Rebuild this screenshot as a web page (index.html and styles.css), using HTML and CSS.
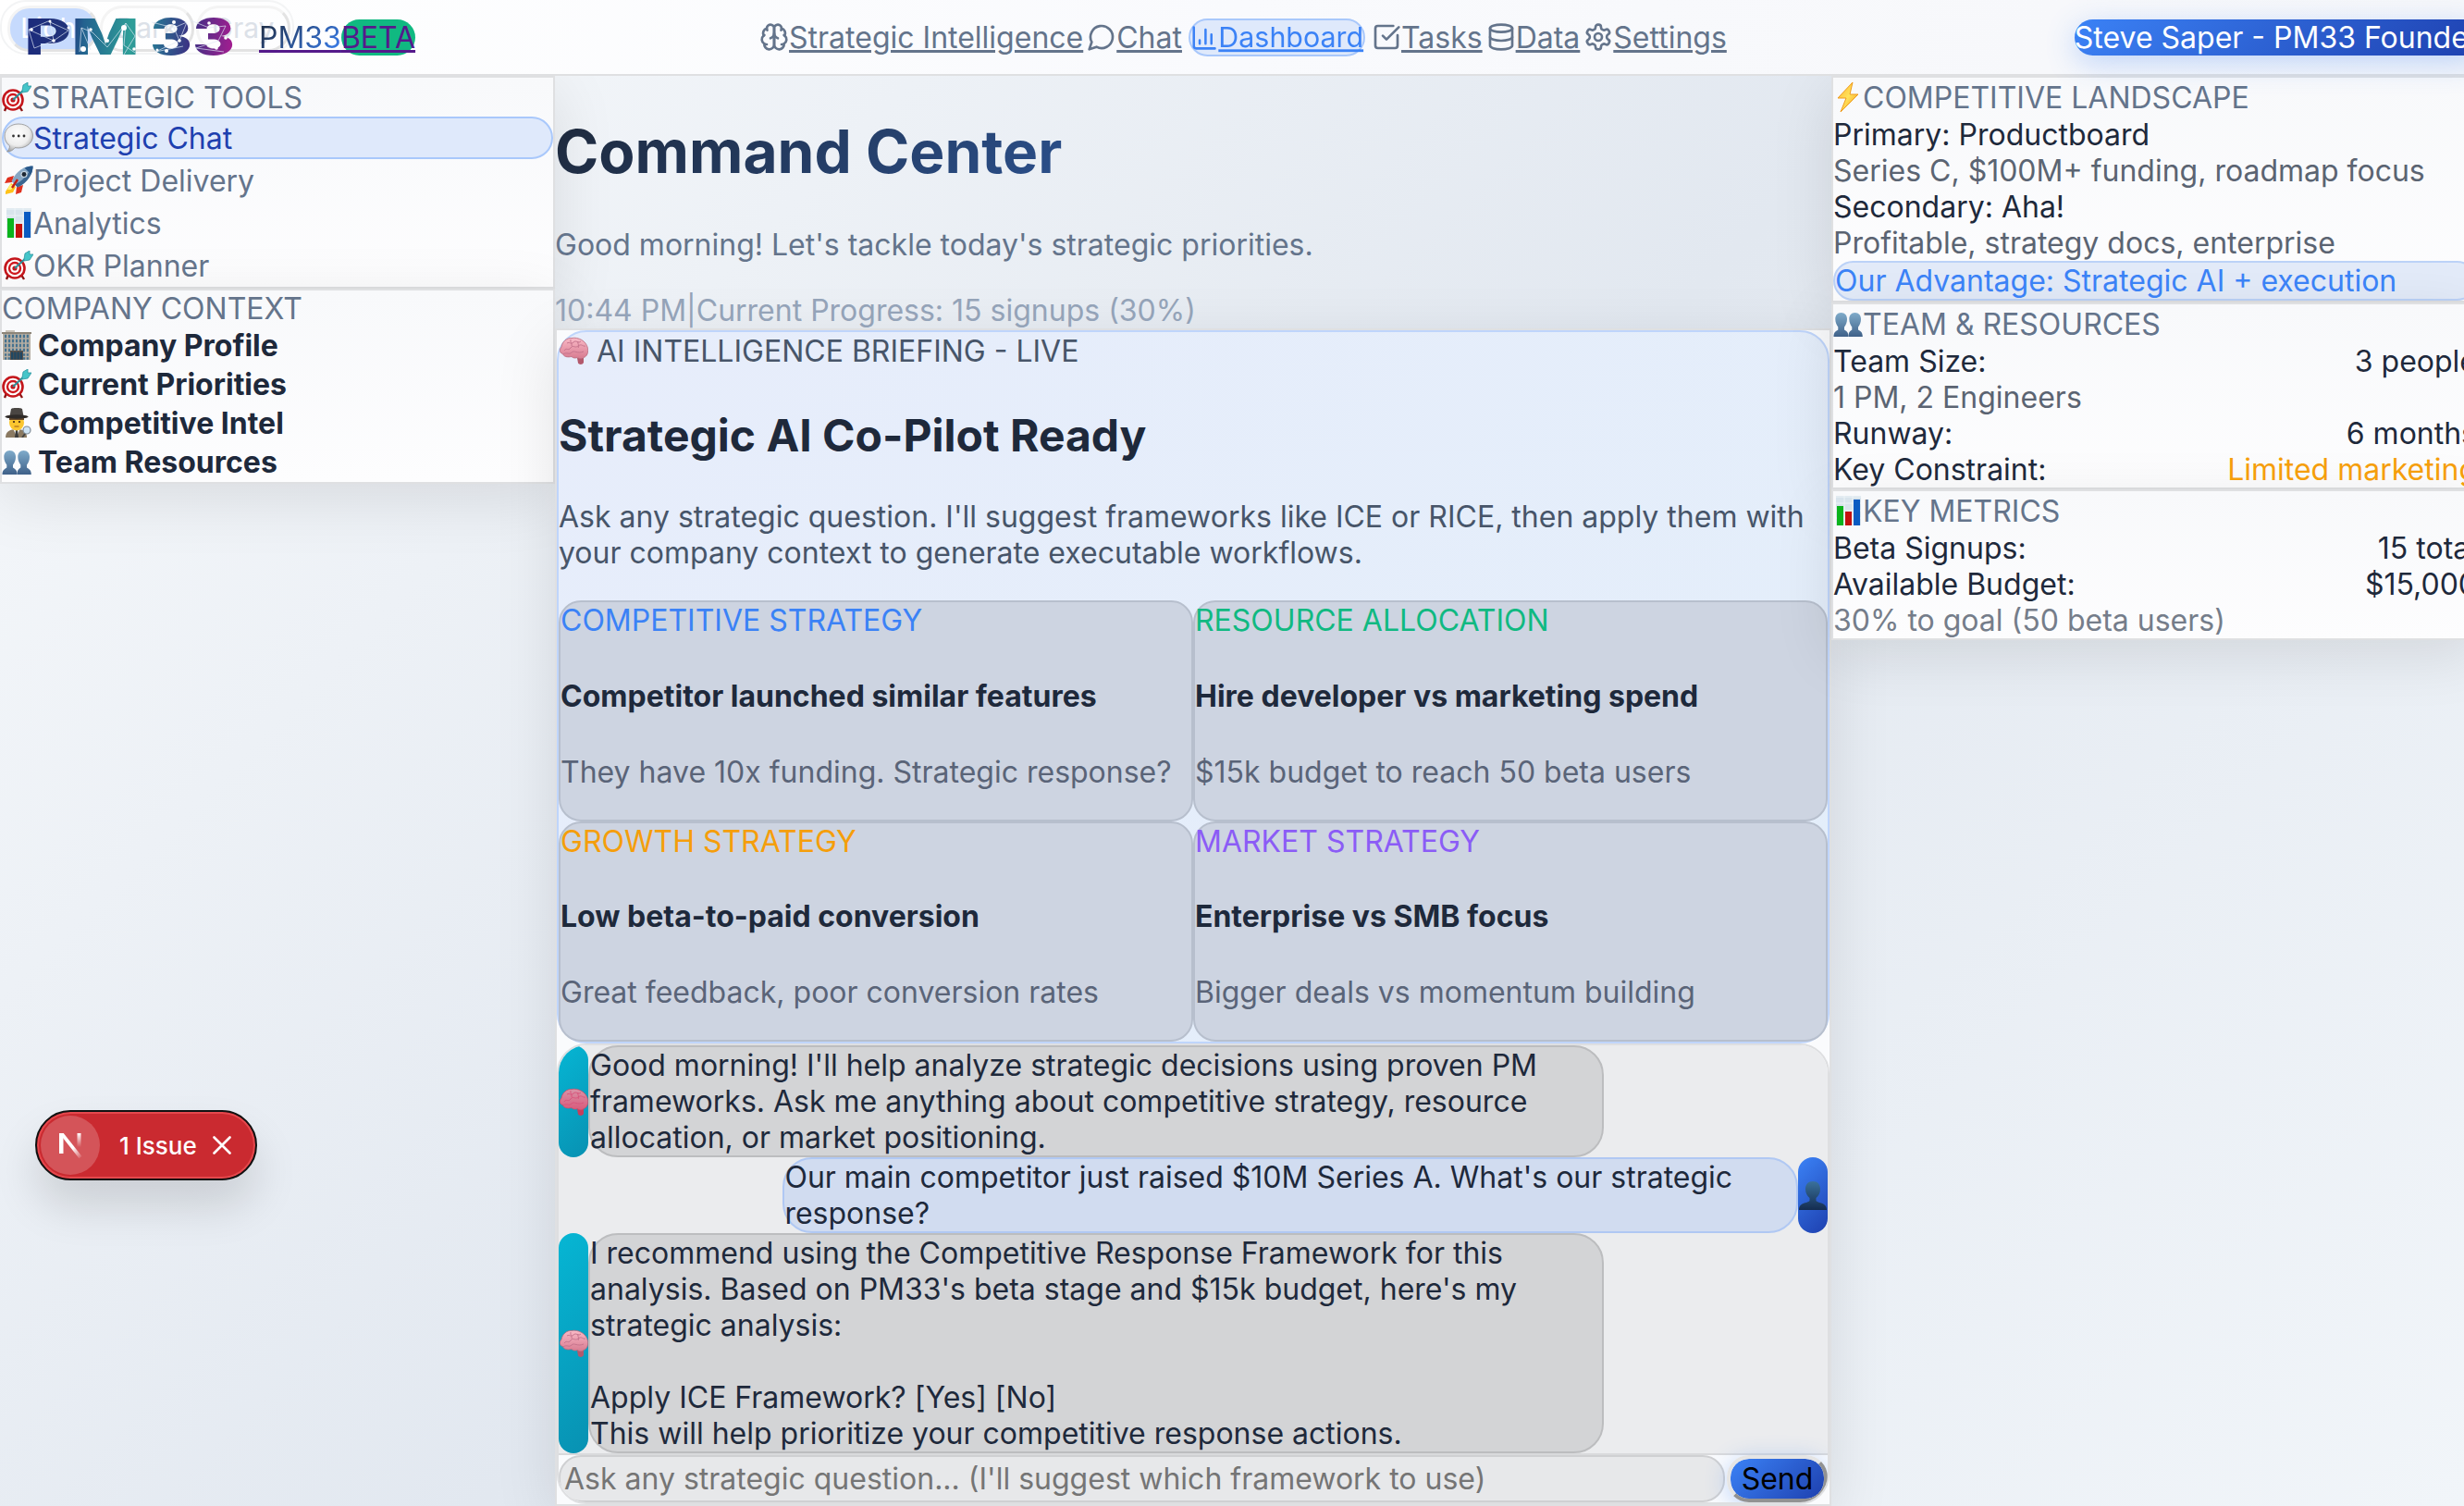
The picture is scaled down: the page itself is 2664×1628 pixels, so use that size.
FILE: index.html
```html
<!DOCTYPE html>
<html lang="en">
<head>
<meta charset="utf-8">
<title>PM33 Command Center</title>
<link rel="stylesheet" href="styles.css">
</head>
<body>
<svg class="defs" width="0" height="0" aria-hidden="true">
  <defs>
    <linearGradient id="gPink" x1="0" y1="0" x2="0" y2="1"><stop offset="0" stop-color="#f9b9c6"/><stop offset="1" stop-color="#d77a90"/></linearGradient>
    <linearGradient id="gBust" x1="0" y1="0" x2="0" y2="1"><stop offset="0" stop-color="#7fabca"/><stop offset="1" stop-color="#3f6189"/></linearGradient>
    <linearGradient id="gUser" x1="0" y1="0" x2="0" y2="1"><stop offset="0" stop-color="#3a719c"/><stop offset="1" stop-color="#142c50"/></linearGradient>
    <radialGradient id="gBubble" cx=".45" cy=".35" r=".65"><stop offset="0" stop-color="#ffffff"/><stop offset=".65" stop-color="#ededed"/><stop offset="1" stop-color="#a9a9a9"/></radialGradient>
    <linearGradient id="gBolt" x1="0" y1="0" x2="1" y2="1"><stop offset="0" stop-color="#ffb02e"/><stop offset=".5" stop-color="#ffe25a"/><stop offset="1" stop-color="#f28c13"/></linearGradient>
  </defs>
  <symbol id="e-target" viewBox="0 0 32 32">
    <path d="M5 26l-2 5M19 26l3 5" stroke="#8c1414" stroke-width="2.4"/>
    <circle cx="12" cy="19" r="11.8" fill="#c4161c"/><circle cx="12" cy="19" r="9.2" fill="#fff"/><circle cx="12" cy="19" r="7.2" fill="#cf1a20"/><circle cx="12" cy="19" r="4.8" fill="#fff"/><circle cx="12" cy="19" r="2.6" fill="#c4161c"/>
    <path d="M12 19L25 7" stroke="#2b8d97" stroke-width="2"/>
    <path d="M22 9l1-6 5-3 0 4 4 0-4 6-6 1z" fill="#45c5c9" stroke="#2b96a0" stroke-width=".8"/>
  </symbol>
  <symbol id="e-speech" viewBox="0 0 32 32">
    <path d="M16 1C7.500 1 1 6.500 1 14c0 4.500 2 8.300 5.500 10.700C6.500 27.500 5 29.500 3.500 31c4 0 7-2 8.500-4.300C23 28.500 31.500 22 31.500 14 31.500 6.500 25 1 16 1z" fill="url(#gBubble)" stroke="#8f8f8f" stroke-width=".8"/>
    <g fill="#333"><circle cx="10.500" cy="14" r="1.400"/><circle cx="16.200" cy="14" r="1.400"/><circle cx="22" cy="14" r="1.400"/></g>
  </symbol>
  <symbol id="e-rocket" viewBox="0 0 32 32">
    <path d="M8 19l-6 9 0 3 8-2 3-6z" fill="#ffc21a"/><path d="M7 20l-3 6 4 0 3-4z" fill="#fff27a"/>
    <path d="M11 11L4 13 1 19l8-1zM21 21l-2 8-6 2 1-8z" fill="#e0301e"/>
    <path d="M31.500.5C23 .5 14 5 8.500 17l6.500 6.500C26 18.500 31.500 9 31.500.5z" fill="#86a7c4"/>
    <path d="M31.500.5C26 10 20 17 12 20.500l3 3C26 18.500 31.500 9 31.500.5z" fill="#3b6690"/>
    <path d="M31.500.5c-3 0-6 .6-9 2l7 7c1.400-3 2-6 2-9z" fill="#28588a"/>
    <circle cx="22" cy="9.500" r="3.600" fill="#c8d6e0"/><circle cx="22" cy="9.500" r="2.400" fill="#1c2733"/>
    <path d="M15 15l-6 9" stroke="#c41f14" stroke-width="2.400"/>
  </symbol>
  <symbol id="e-chart" viewBox="0 0 32 32">
    <rect x="3" y="0" width="27" height="32" fill="#d8e4ec"/><path d="M3 1h27M3 8h27M3 16h27M3 24h27M12 0v32M21 0v32" stroke="#edf3f7" stroke-width="1"/>
    <rect x="4" y="11" width="7" height="21" fill="#0bb31c"/><rect x="13" y="17" width="7" height="15" fill="#c3110e"/><rect x="22" y="4" width="7" height="28" fill="#0a5bc2"/>
  </symbol>
  <symbol id="e-office" viewBox="0 0 32 32">
    <rect x="4" y="0" width="10" height="3" fill="#c9c2b8"/><rect x="1" y="2" width="30" height="30" fill="#b5aea3"/><rect x="0" y="2" width="32" height="2" fill="#8d8578"/>
    <path d="M3 6.500h26M3 11.500h26M3 16.500h26M3 21.500h26" stroke="#45728f" stroke-width="3.500" stroke-dasharray="2.200 1.760"/>
    <path d="M3 26.500h6M3 30.500h6M23 26.500h6M23 30.500h6" stroke="#45728f" stroke-width="2.500" stroke-dasharray="2.200 1.500"/>
    <rect x="9" y="22" width="14" height="10" fill="#5a5048"/><path d="M10 27.500h12" stroke="#1f4763" stroke-width="8" stroke-dasharray="2.400 .8"/>
  </symbol>
  <symbol id="e-detective" viewBox="0 0 32 32">
    <path d="M4 32c0-6 4-9 12-9s11 3 11 9z" fill="#8b7a62"/><path d="M12 22l4 9 4-9z" fill="#eef0f2"/><path d="M15 24h2l1 8h-4z" fill="#3b3b3b"/>
    <ellipse cx="16" cy="16" rx="8" ry="8.500" fill="#fbc62f"/><path d="M8 13v-3h16v3z" fill="#6a4b2a"/>
    <path d="M8.500 9L10 1c2-1.500 10-1.500 12 0l1.500 8z" fill="#4a4643"/><ellipse cx="16" cy="9.500" rx="12.500" ry="2.200" fill="#2f2b29"/>
    <circle cx="13" cy="15" r="1.100" fill="#3b2417"/><circle cx="19" cy="15" r="1.100" fill="#3b2417"/><path d="M13.500 20h5" stroke="#9c5a1a" stroke-width="1"/>
    <circle cx="27" cy="24" r="4" fill="#cfe4f4" stroke="#7e8a96" stroke-width="1.200"/><path d="M25 28l-3 4" stroke="#444" stroke-width="1.800"/>
  </symbol>
  <symbol id="e-busts" viewBox="0 0 32 32">
    <path id="bust" d="M8.500 4C4.500 4 2.300 7 2.300 11c0 3.500 1.400 6.500 3 8.500v3C3.500 24 .5 24.500.5 30h16c0-5.500-2.500-6-4.500-7.500v-3c1.700-2 3-5 3-8.500 0-4-2.300-7-6.500-7z" fill="url(#gBust)"/>
    <path d="M23.500 4c-4 0-6.200 3-6.200 7 0 3.500 1.400 6.500 3 8.500v3c-1.800 1.500-3.800 2-3.800 7.500h15.300c0-5.500-2.800-6-4.800-7.500v-3c1.700-2 3-5 3-8.500 0-4-2.300-7-6.500-7z" fill="url(#gBust)"/>
  </symbol>
  <symbol id="e-user" viewBox="0 0 32 32">
    <path d="M16 1c-5 0-8 3.200-8 8.500 0 4 2 7.500 4.500 9.500v3C10 25 1 23.500 1 32h30c0-8.500-9-7-11.500-10v-3c2.500-2 4.500-5.500 4.500-9.500C24 4.200 21 1 16 1z" fill="url(#gUser)"/>
  </symbol>
  <symbol id="e-brain" viewBox="0 0 32 32">
    <path d="M20 24l7 0 0 5c-1 2.500-5 2.500-6 .5z" fill="#b3596c"/>
    <path d="M3 12C4 6 9 2 14 2.500c7-1.500 16 3 17.500 11 .8 5-1 9-4.500 10-2 2-5 1.500-6.500 0-3 1-5 .5-6.500-1-5 1-8.500 0-9.500-3C.5 18.500.8 14.500 3 12z" fill="url(#gPink)" stroke="#b9687b" stroke-width=".8"/>
    <path d="M6 16c3-4 4 1 7-3s4 1 8-2 5 1 8 0M9 8c3-2 4 2 7-1s5 2 8-1M5 20c4-3 6 1 9-2s6 2 13-1M13 4c-1 4 2 3 1 7M21 6c-1 3 2 4 0 7" fill="none" stroke="#c2708a" stroke-width=".9"/>
  </symbol>
  <symbol id="e-bolt" viewBox="0 0 32 32">
    <path d="M21 0L5 17h9L8 32l19-19h-9z" fill="url(#gBolt)" stroke="#ee9a1c" stroke-width="1"/>
  </symbol>
</svg>

<header class="topbar">
  <div class="themes">
    <span class="theme theme-on">Light</span><span class="theme">Dark</span><span class="theme">Gray</span>
  </div>
  <a class="brand" href="#">
    <svg class="logo" width="228" height="44" viewBox="0 0 228 44">
      <defs>
        <linearGradient id="lg" gradientUnits="userSpaceOnUse" x1="0" y1="10" x2="228" y2="30">
          <stop offset="0" stop-color="#1b2a7c"/><stop offset=".2" stop-color="#22347a"/><stop offset=".27" stop-color="#23618f"/><stop offset=".5" stop-color="#2f9f98"/><stop offset=".62" stop-color="#2a6f92"/><stop offset=".78" stop-color="#3c3183"/><stop offset="1" stop-color="#ad1c92"/>
        </linearGradient>
      </defs>
      <g class="logo-text" fill="url(#lg)">
        <text x="-2" y="41" textLength="125" lengthAdjust="spacingAndGlyphs">PM</text>
        <text x="134" y="41" textLength="92" lengthAdjust="spacingAndGlyphs">33</text>
      </g>
      <g fill="none" stroke="#dfe9f5" stroke-width=".8" opacity=".85">
        <path d="M3 14L24 5l22 10-16 11L3 14l6 20 21-8-4-21M58 38l2-26 12 5 16 16 20-26 10 14-12 20M60 12l10 24M108 7l-2 24 12 8M136 6l24 6 14-6-8 20-26 12 30-6M178 4l20 8 18-2-8 16-24 8 30 4M160 12l6 14"/>
      </g>
      <g fill="#fff">
        <circle cx="6" cy="14" r="1.800"/><circle cx="26" cy="5" r="1.500"/><circle cx="30" cy="26" r="1.800"/><circle cx="46" cy="12" r="1.500"/><circle cx="62" cy="35" r="3"/><circle cx="70" cy="14" r="1.800"/><circle cx="88" cy="26" r="2"/><circle cx="106" cy="12" r="3"/><circle cx="117" cy="35" r="1.800"/><circle cx="160" cy="6" r="2"/><circle cx="166" cy="26" r="1.800"/><circle cx="152" cy="37" r="2"/><circle cx="198" cy="7" r="1.800"/><circle cx="216" cy="23" r="1.800"/><circle cx="206" cy="34" r="1.800"/><circle cx="142" cy="36" r="1.500"/>
      </g>
    </svg>
    <span class="brand-name"><span class="brand-text">PM33</span><span class="beta">BETA</span></span>
  </a>
  <nav class="nav">
    <a href="#" class="nav-item"><svg class="ico" viewBox="0 0 24 24"><path d="M12 5a3 3 0 1 0-5.997.125 4 4 0 0 0-2.526 5.770 4 4 0 0 0 .556 6.588A4 4 0 1 0 12 18Z"/><path d="M12 5a3 3 0 1 1 5.997.125 4 4 0 0 1 2.526 5.770 4 4 0 0 1-.556 6.588A4 4 0 1 1 12 18Z"/><path d="M15 13a4.500 4.500 0 0 1-3-4 4.500 4.500 0 0 1-3 4"/><path d="M17.599 6.500a3 3 0 0 0 .399-1.375M6.003 5.125A3 3 0 0 0 6.401 6.500M3.477 10.896a4 4 0 0 1 .585-.396M19.938 10.500a4 4 0 0 1 .585.396M6 18a4 4 0 0 1-1.967-.516M19.967 17.484A4 4 0 0 1 18 18"/></svg><span>Strategic Intelligence</span></a>
    <a href="#" class="nav-item"><svg class="ico" viewBox="0 0 24 24"><path d="M7.900 20A9 9 0 1 0 4 16.100L2 22Z"/></svg><span>Chat</span></a>
    <a href="#" class="nav-item nav-active"><svg class="ico" viewBox="0 0 24 24"><path d="M3 3v16a2 2 0 0 0 2 2h16M18 17V9M13 17V5M8 17v-3"/></svg><span>Dashboard</span></a>
    <a href="#" class="nav-item"><svg class="ico" viewBox="0 0 24 24"><path d="M21 10.500V19a2 2 0 0 1-2 2H5a2 2 0 0 1-2-2V5a2 2 0 0 1 2-2h12.500"/><path d="m9 11 3 3L22 4"/></svg><span>Tasks</span></a>
    <a href="#" class="nav-item"><svg class="ico" viewBox="0 0 24 24"><ellipse cx="12" cy="5" rx="9" ry="3"/><path d="M3 5v14a9 3 0 0 0 18 0V5"/><path d="M3 12a9 3 0 0 0 18 0"/></svg><span>Data</span></a>
    <a href="#" class="nav-item"><svg class="ico" viewBox="0 0 24 24"><path d="M12.220 2h-.440a2 2 0 0 0-2 2v.180a2 2 0 0 1-1 1.730l-.430.250a2 2 0 0 1-2 0l-.150-.080a2 2 0 0 0-2.730.730l-.220.380a2 2 0 0 0 .730 2.730l.150.100a2 2 0 0 1 1 1.720v.510a2 2 0 0 1-1 1.740l-.150.090a2 2 0 0 0-.730 2.730l.220.380a2 2 0 0 0 2.730.730l.150-.080a2 2 0 0 1 2 0l.430.250a2 2 0 0 1 1 1.730V20a2 2 0 0 0 2 2h.440a2 2 0 0 0 2-2v-.180a2 2 0 0 1 1-1.730l.430-.250a2 2 0 0 1 2 0l.150.080a2 2 0 0 0 2.730-.730l.220-.390a2 2 0 0 0-.730-2.730l-.150-.080a2 2 0 0 1-1-1.740v-.500a2 2 0 0 1 1-1.740l.150-.090a2 2 0 0 0 .730-2.730l-.220-.380a2 2 0 0 0-2.730-.730l-.150.080a2 2 0 0 1-2 0l-.430-.250a2 2 0 0 1-1-1.730V4a2 2 0 0 0-2-2z"/><circle cx="12" cy="12" r="3"/></svg><span>Settings</span></a>
  </nav>
  <div class="user">Steve Saper - PM33 Founder</div>
</header>

<div class="layout">
  <aside class="side">
    <section class="panel">
      <div class="panel-title"><svg class="emo"><use href="#e-target"/></svg>STRATEGIC TOOLS</div>
      <div class="tool tool-on"><svg class="emo"><use href="#e-speech"/></svg>Strategic Chat</div>
      <div class="tool"><svg class="emo"><use href="#e-rocket"/></svg>Project Delivery</div>
      <div class="tool"><svg class="emo"><use href="#e-chart"/></svg>Analytics</div>
      <div class="tool"><svg class="emo"><use href="#e-target"/></svg>OKR Planner</div>
    </section>
    <section class="panel">
      <div class="plain-title">COMPANY CONTEXT</div>
      <div class="context"><svg class="emo"><use href="#e-office"/></svg>Company Profile</div>
      <div class="context"><svg class="emo"><use href="#e-target"/></svg>Current Priorities</div>
      <div class="context"><svg class="emo"><use href="#e-detective"/></svg>Competitive Intel</div>
      <div class="context"><svg class="emo"><use href="#e-busts"/></svg>Team Resources</div>
    </section>
  </aside>

  <main class="main">
    <h1>Command Center</h1>
    <p class="greeting">Good morning! Let's tackle today's strategic priorities.</p>
    <div class="status"><span>10:44 PM</span><span>|</span><span>Current Progress: 15 signups (30%)</span></div>

    <div class="board">
      <section class="briefing">
        <div class="eyebrow"><svg class="emo"><use href="#e-brain"/></svg>AI INTELLIGENCE BRIEFING - LIVE</div>
        <h2>Strategic AI Co-Pilot Ready</h2>
        <p class="intro">Ask any strategic question. I'll suggest frameworks like ICE or RICE, then apply them with your company context to generate executable workflows.</p>
        <div class="cards">
          <article class="card"><div class="c-blue">COMPETITIVE STRATEGY</div><h4>Competitor launched similar features</h4><p>They have 10x funding. Strategic response?</p></article>
          <article class="card"><div class="c-green">RESOURCE ALLOCATION</div><h4>Hire developer vs marketing spend</h4><p>$15k budget to reach 50 beta users</p></article>
          <article class="card"><div class="c-amber">GROWTH STRATEGY</div><h4>Low beta-to-paid conversion</h4><p>Great feedback, poor conversion rates</p></article>
          <article class="card"><div class="c-violet">MARKET STRATEGY</div><h4>Enterprise vs SMB focus</h4><p>Bigger deals vs momentum building</p></article>
        </div>
      </section>
      <section class="chat">
        <div class="messages">
          <div class="msg"><div class="avatar avatar-ai avatar-deep"><svg class="emo"><use href="#e-brain"/></svg></div><div class="bubble">Good morning! I'll help analyze strategic decisions using proven PM frameworks. Ask me anything about competitive strategy, resource allocation, or market positioning.</div></div>
          <div class="msg msg-me"><div class="bubble bubble-me">Our main competitor just raised $10M Series A. What's our strategic response?</div><div class="avatar avatar-me"><svg class="emo"><use href="#e-user"/></svg></div></div>
          <div class="msg"><div class="avatar avatar-ai"><svg class="emo"><use href="#e-brain"/></svg></div><div class="bubble">I recommend using the Competitive Response Framework for this analysis. Based on PM33's beta stage and $15k budget, here's my strategic analysis:<br><br>Apply ICE Framework? [Yes] [No]<br>This will help prioritize your competitive response actions.</div></div>
        </div>
        <div class="composer">
          <input class="ask" type="text" placeholder="Ask any strategic question... (I'll suggest which framework to use)">
          <button class="send" type="button">Send</button>
        </div>
      </section>
    </div>
  </main>

  <aside class="side">
    <section class="panel">
      <div class="panel-title"><svg class="emo"><use href="#e-bolt"/></svg>COMPETITIVE LANDSCAPE</div>
      <div>Primary: Productboard</div>
      <div class="muted">Series C, $100M+ funding, roadmap focus</div>
      <div>Secondary: Aha!</div>
      <div class="muted">Profitable, strategy docs, enterprise</div>
      <div class="advantage">Our Advantage: Strategic AI + execution</div>
    </section>
    <section class="panel">
      <div class="panel-title"><svg class="emo"><use href="#e-busts"/></svg>TEAM &amp; RESOURCES</div>
      <div class="fact"><span>Team Size:</span><span>3 people</span></div>
      <div class="muted">1 PM, 2 Engineers</div>
      <div class="fact"><span>Runway:</span><span>6 months</span></div>
      <div class="fact"><span>Key Constraint:</span><span class="c-amber">Limited marketing</span></div>
    </section>
    <section class="panel">
      <div class="panel-title"><svg class="emo"><use href="#e-chart"/></svg>KEY METRICS</div>
      <div class="fact"><span>Beta Signups:</span><span>15 total</span></div>
      <div class="fact"><span>Available Budget:</span><span>$15,000</span></div>
      <div class="faint">30% to goal (50 beta users)</div>
    </section>
  </aside>
</div>

<div class="issue">
  <span class="issue-mark"><svg width="28" height="30" viewBox="0 0 28 30"><defs><linearGradient id="nd" x1="0" y1="0" x2="1" y2="1"><stop offset=".6" stop-color="#fff"/><stop offset="1" stop-color="#fff" stop-opacity="0"/></linearGradient><linearGradient id="ns" x1="0" y1="0" x2="0" y2="1"><stop offset="0" stop-color="#fff"/><stop offset="1" stop-color="#fff" stop-opacity="0"/></linearGradient></defs><path d="M2 2h4.500v22H2z" fill="#fff"/><path d="M2 2h4.700L26.500 27l-3 2.200z" fill="url(#nd)"/><path d="M21.500 2h4v15h-4z" fill="url(#ns)"/></svg></span>
  <span class="issue-text">1 Issue</span>
  <svg class="issue-x" width="20" height="20" viewBox="0 0 20 20"><path d="M1.500 1.500l17 17M18.500 1.500l-17 17" stroke="#fff" stroke-width="2.600" stroke-linecap="round"/></svg>
</div>
</body>
</html>
```
FILE: styles.css
```css
html { overflow: hidden; }
body {
  margin: 0;
  width: 2664px;
  height: 1628px;
  overflow: hidden;
  font: 32px/39px Inter, sans-serif;
  color: #1e293b;
  background: linear-gradient(135deg, #f8fafc 0%, #e2e8f0 50%, #f1f5f9 100%);
}
.defs { position: absolute; }
.emo { width: 32px; height: 32px; flex: none; }

/* top bar */
.topbar {
  position: relative;
  z-index: 2;
  display: flex;
  align-items: center;
  height: 80px;
  border-bottom: 2px solid #dfe0e2;
  background: linear-gradient(100deg, #ffffff, #f9fafd 50%, #f6f7fa);
  white-space: nowrap;
}
.themes {
  position: absolute;
  left: 0;
  top: 0;
  display: flex;
  gap: 2px;
  padding: 4px 2px 1px 6px;
  border: 2px solid #f3f4f5;
  border-radius: 28px;
  font-size: 30px;
  line-height: 36px;
  color: #dce1e8;
}
.theme {
  box-sizing: border-box;
  width: 102px;
  padding: 3px 0 5px;
  border: 3px solid;
  border-color: #f4f4f4 #e3e3e3 #e3e3e3 #f4f4f4;
  border-radius: 24px;
  text-align: center;
}
.theme-on { width: 98px; background: #c6dafd; color: #fff; }
.brand {
  position: relative;
  display: flex;
  align-items: center;
  margin-left: 28px;
  color: #551a8b;
  text-decoration: none;
}
.logo-text { font: 800 53px Inter, sans-serif; }
.brand-name { display: flex; margin-left: 24px; }
.brand-text {
  background: linear-gradient(135deg, #1e293b, #3b82f6);
  background-clip: text;
  -webkit-text-fill-color: transparent;
}
.brand-text, .beta { text-decoration: underline #551a8b 3px; }
.beta { background: #10b981; border-radius: 20px; }
.nav { display: flex; align-items: center; margin-left: 370px; }
.nav-item {
  display: flex;
  align-items: center;
  height: 39px;
  border: 2px solid transparent;
  color: #64748b;
  text-decoration-thickness: 3px;
}
.nav-active {
  border-color: #a9c8fb;
  border-radius: 24px;
  background: #dfe9fb;
  color: #3b82f6;
  transform: scale(.95);
}
.ico {
  width: 32px;
  height: 32px;
  fill: none;
  stroke: currentColor;
  stroke-width: 2;
  stroke-linecap: round;
  stroke-linejoin: round;
}
.user {
  margin-left: 374px;
  padding-right: 4px;
  border-radius: 24px;
  background: linear-gradient(135deg, #3b82f6, #1e40af);
  box-shadow: 0 8px 32px rgba(59, 130, 246, .3);
  color: #fff;
}

/* three columns */
.layout {
  display: grid;
  grid-template-columns: 600px 1380px 700px;
  align-items: start;
}
.panel {
  border: 2px solid #dfe0e2;
  background: linear-gradient(180deg, #f8f9fb, #fdfdfe);
  box-shadow: 0 16px 64px rgba(0, 0, 0, .1);
}
.panel-title { display: flex; align-items: center; height: 42px; color: #64748b; }
.plain-title { color: #64748b; }
.tool {
  display: flex;
  align-items: center;
  height: 42px;
  border: 2px solid transparent;
  color: #64748b;
}
.tool-on {
  border-color: #a9c8fb;
  border-radius: 24px;
  background: #dfe9fb;
  color: #1e40af;
}
.context {
  box-sizing: border-box;
  display: flex;
  align-items: center;
  gap: 7px;
  height: 42px;
  padding-bottom: 2px;
  font-weight: 700;
}
.muted { color: #5b6472; }
.faint { color: #757d8a; }
.advantage {
  border: 2px solid #bcd2f7;
  border-radius: 24px;
  background: #e3ebf9;
  color: #3b82f6;
}
.fact { display: flex; justify-content: space-between; }

/* centre column */
h1 {
  margin: 43px 0;
  font-size: 64px;
  line-height: 77px;
  background: linear-gradient(135deg, #1e293b, #3b82f6);
  background-clip: text;
  -webkit-text-fill-color: transparent;
}
.greeting { margin: 0 0 32px; color: #64748b; }
.status { display: flex; color: #94a3b8; }
.board {
  border: 2px solid #dfe0e2;
  background: #fafbfd;
  box-shadow: 0 16px 64px rgba(0, 0, 0, .1);
}
.briefing {
  border: 2px solid #bfd5fb;
  border-radius: 32px;
  background: linear-gradient(135deg, #e7edfb, #e3eefa);
}
.eyebrow {
  box-sizing: border-box;
  display: flex;
  align-items: center;
  gap: 9px;
  height: 42px;
  padding-bottom: 2px;
  color: #475569;
}
h2 { margin: 41px 0 39px; font-size: 48px; line-height: 58px; }
.intro { margin: 0 0 32px; color: #475569; }
.cards { display: grid; grid-template-columns: 1fr 1fr; }
.card {
  border: 2px solid #b7bfcd;
  border-radius: 24px;
  background: #cdd4e1;
}
.card h4 { margin: 42.5px 0 43px; }
.card p { margin: 0 0 32px; color: #5a6478; }
.c-blue { color: #3b82f6; }
.c-green { color: #10b981; }
.c-amber { color: #f59e0b; }
.c-violet { color: #8b5cf6; }

/* chat */
.chat { border: 2px solid #dedfe1; border-radius: 32px; overflow: hidden; }
.messages { background: #ebecee; }
.msg { display: flex; }
.msg-me { justify-content: flex-end; }
.avatar { display: flex; align-items: center; width: 32px; border-radius: 16px; }
.avatar-ai { background: linear-gradient(135deg, #06b6d4, #0891b2); }
.avatar-deep .emo { filter: saturate(1.8) brightness(.85); }
.avatar-me { background: linear-gradient(135deg, #3b82f6, #1e40af); }
.bubble {
  box-sizing: border-box;
  width: 80%;
  border: 2px solid #bcbdbf;
  border-radius: 32px;
  background: #d3d4d6;
}
.bubble-me { border-color: #b0c8f3; background: #d1dcf0; }
.composer { display: flex; gap: 2px; border-top: 2px solid #d9dadc; }
.ask {
  flex: 1;
  min-width: 0;
  box-sizing: border-box;
  height: 51px;
  padding: 2px 4px;
  border: 2px solid #cfd0d2;
  border-radius: 24px;
  background: #e7e8ea;
  font: inherit;
}
.ask::placeholder { color: #757575; }
.send {
  box-sizing: border-box;
  width: 109px;
  height: 51px;
  padding: 0;
  border: 4px solid;
  border-color: #e5e5e5 #929292 #929292 #e5e5e5;
  border-radius: 24px;
  background: linear-gradient(135deg, #3b82f6, #1e40af) padding-box;
  box-shadow: 0 4px 24px rgba(59, 130, 246, .3);
  font: inherit;
  color: #000;
}

/* floating issue badge */
.issue {
  position: absolute;
  left: 38px;
  top: 1200px;
  z-index: 3;
  box-sizing: border-box;
  display: flex;
  align-items: center;
  width: 240px;
  height: 76px;
  padding-left: 2px;
  border: 2px solid #111;
  border-radius: 38px;
  background: #ca2a30;
  box-shadow: inset 0 0 0 2px #e5484d, 0 28px 48px rgba(0, 0, 0, .13);
  color: #fff;
}
.issue-mark {
  display: flex;
  align-items: center;
  justify-content: center;
  width: 64px;
  height: 64px;
  margin-left: 2px;
  border-radius: 50%;
  background: rgba(255, 255, 255, .2);
}
.issue-text { width: 86px; margin-left: 21px; font-size: 26px; font-weight: 500; white-space: nowrap; }
.issue-x { margin-left: 15px; }
```
